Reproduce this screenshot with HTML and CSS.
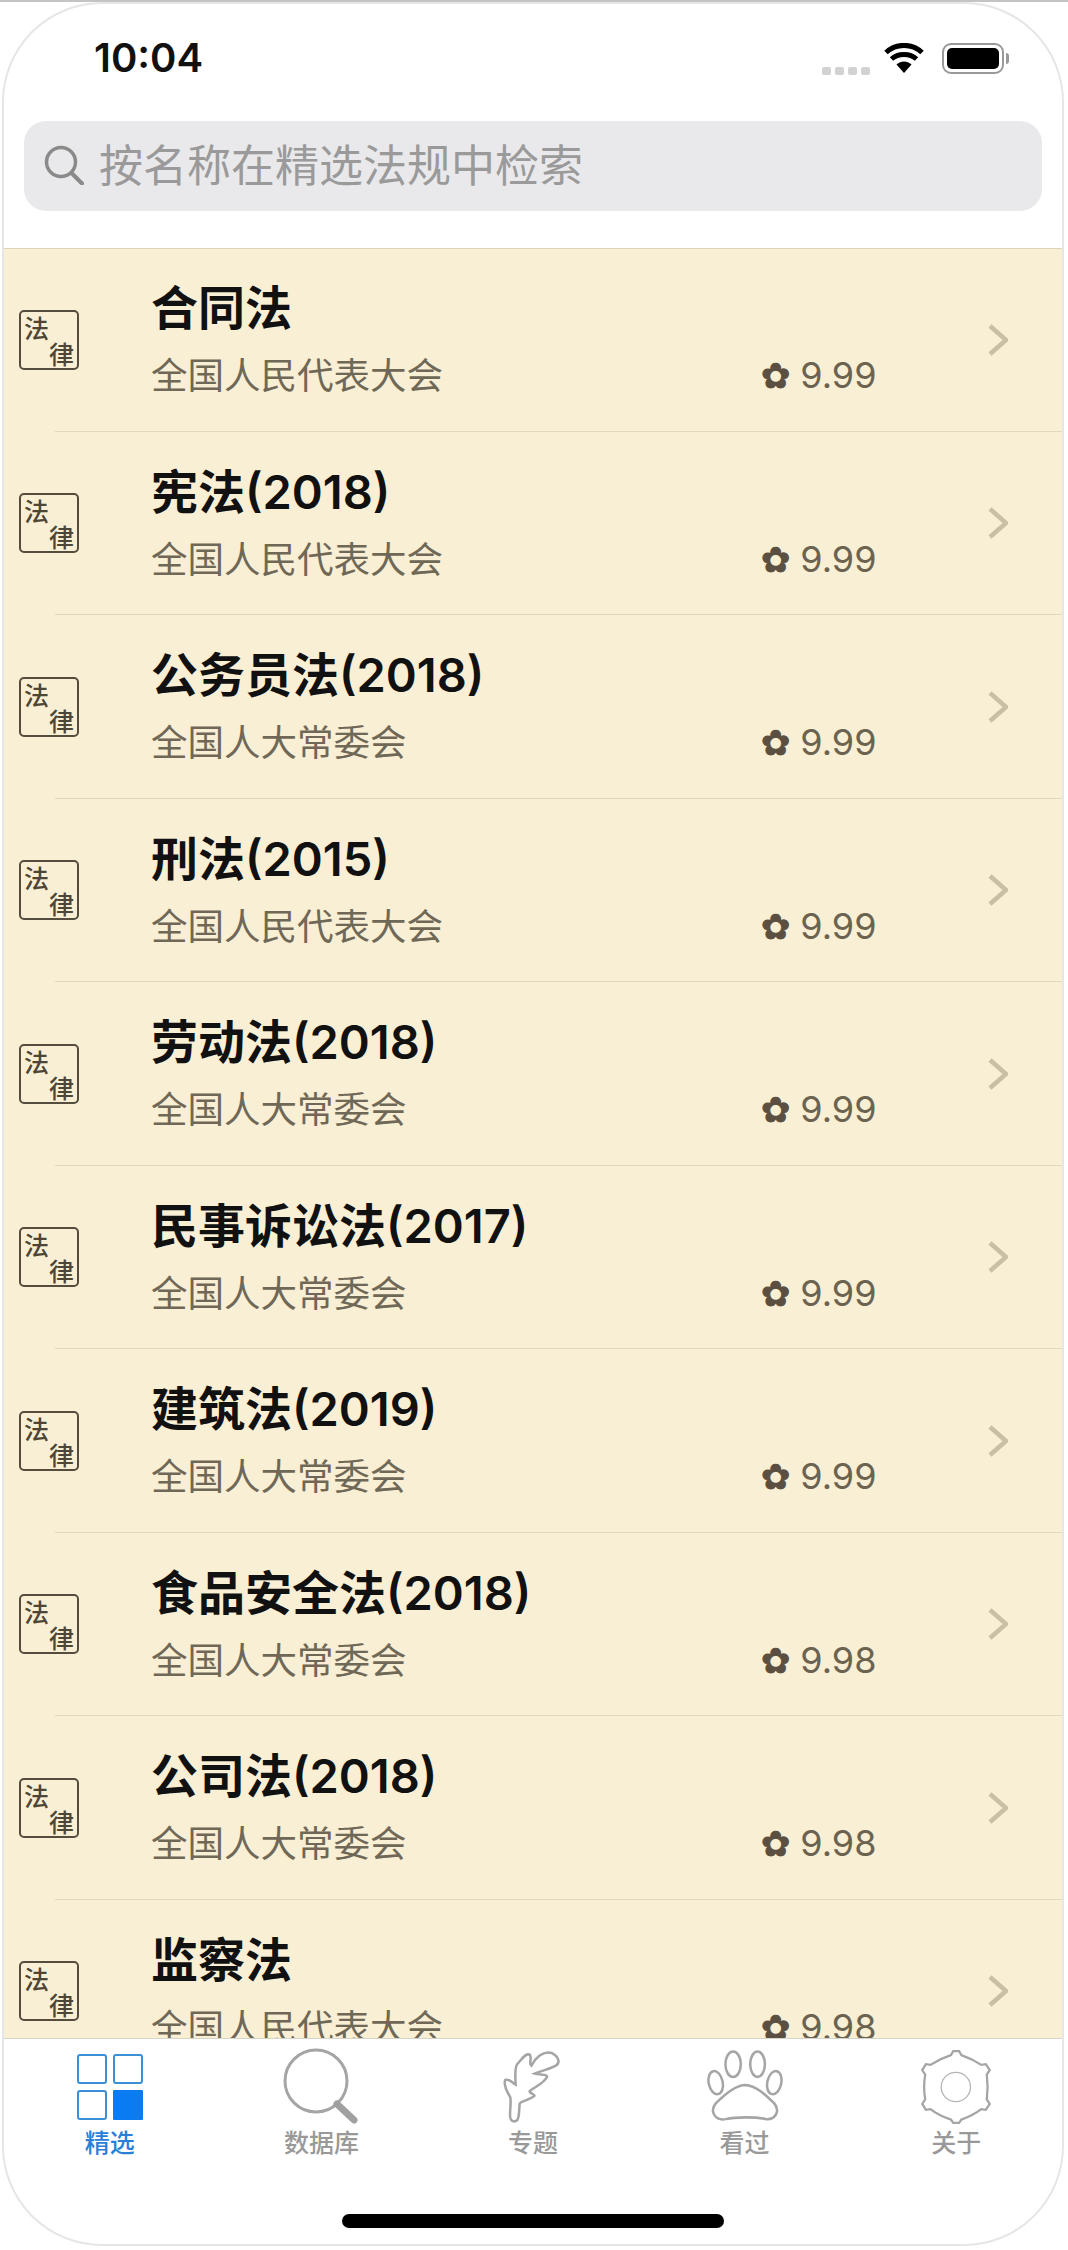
FILE: index.html
```html
<!DOCTYPE html>
<html lang="zh-CN">
<head>
    <meta charset="UTF-8">
    <meta name="viewport" content="width=device-width, initial-scale=1.0">
    <title>精选法规</title>
    <link rel="stylesheet" href="styles.css">
</head>
<body>
    <div class="phone">
        <div class="status-bar">
            <span class="time">10:04</span>
            <div class="status-icons">
                <div class="signal"><i></i><i></i><i></i><i></i></div>
                <svg class="wifi" viewBox="0 0 40 30">
                    <path d="M20 30 L12.500 21.500 C17 17.500 23 17.500 27.500 21.500 Z" fill="#000"/>
                    <path d="M7.500 16 C14 10 26 10 32.500 16" fill="none" stroke="#000" stroke-width="5"/>
                    <path d="M2 9.500 C12 0 28 0 38 9.500" fill="none" stroke="#000" stroke-width="5"/>
                </svg>
                <div class="battery"><div class="battery-level"></div></div>
                <div class="battery-cap"></div>
            </div>
        </div>
        <div class="search-wrap">
            <div class="search-box">
                <svg class="search-icon" viewBox="0 0 40 40">
                    <circle cx="17" cy="17" r="14.500" fill="none" stroke="#8a8a8a" stroke-width="3.500"/>
                    <path d="M27.500 28 L38 38.500" fill="none" stroke="#8a8a8a" stroke-width="4" stroke-linecap="round"/>
                </svg>
                <span class="placeholder">按名称在精选法规中检索</span>
            </div>
        </div>

        <div class="list">
            <div class="row">
                <div class="seal"><span>法</span><span>律</span></div>
                <div class="info"><div class="name">合同法</div><div class="org">全国人民代表大会</div></div>
                <div class="score"><span class="flower">✿</span>9.99</div>
                <svg class="chevron" viewBox="0 0 20 32"><path d="M2 2 L18 16 L2 30" /></svg>
            </div>
            <div class="row">
                <div class="seal"><span>法</span><span>律</span></div>
                <div class="info"><div class="name">宪法(2018)</div><div class="org">全国人民代表大会</div></div>
                <div class="score"><span class="flower">✿</span>9.99</div>
                <svg class="chevron" viewBox="0 0 20 32"><path d="M2 2 L18 16 L2 30" /></svg>
            </div>
            <div class="row">
                <div class="seal"><span>法</span><span>律</span></div>
                <div class="info"><div class="name">公务员法(2018)</div><div class="org">全国人大常委会</div></div>
                <div class="score"><span class="flower">✿</span>9.99</div>
                <svg class="chevron" viewBox="0 0 20 32"><path d="M2 2 L18 16 L2 30" /></svg>
            </div>
            <div class="row">
                <div class="seal"><span>法</span><span>律</span></div>
                <div class="info"><div class="name">刑法(2015)</div><div class="org">全国人民代表大会</div></div>
                <div class="score"><span class="flower">✿</span>9.99</div>
                <svg class="chevron" viewBox="0 0 20 32"><path d="M2 2 L18 16 L2 30" /></svg>
            </div>
            <div class="row">
                <div class="seal"><span>法</span><span>律</span></div>
                <div class="info"><div class="name">劳动法(2018)</div><div class="org">全国人大常委会</div></div>
                <div class="score"><span class="flower">✿</span>9.99</div>
                <svg class="chevron" viewBox="0 0 20 32"><path d="M2 2 L18 16 L2 30" /></svg>
            </div>
            <div class="row">
                <div class="seal"><span>法</span><span>律</span></div>
                <div class="info"><div class="name">民事诉讼法(2017)</div><div class="org">全国人大常委会</div></div>
                <div class="score"><span class="flower">✿</span>9.99</div>
                <svg class="chevron" viewBox="0 0 20 32"><path d="M2 2 L18 16 L2 30" /></svg>
            </div>
            <div class="row">
                <div class="seal"><span>法</span><span>律</span></div>
                <div class="info"><div class="name">建筑法(2019)</div><div class="org">全国人大常委会</div></div>
                <div class="score"><span class="flower">✿</span>9.99</div>
                <svg class="chevron" viewBox="0 0 20 32"><path d="M2 2 L18 16 L2 30" /></svg>
            </div>
            <div class="row">
                <div class="seal"><span>法</span><span>律</span></div>
                <div class="info"><div class="name">食品安全法(2018)</div><div class="org">全国人大常委会</div></div>
                <div class="score"><span class="flower">✿</span>9.98</div>
                <svg class="chevron" viewBox="0 0 20 32"><path d="M2 2 L18 16 L2 30" /></svg>
            </div>
            <div class="row">
                <div class="seal"><span>法</span><span>律</span></div>
                <div class="info"><div class="name">公司法(2018)</div><div class="org">全国人大常委会</div></div>
                <div class="score"><span class="flower">✿</span>9.98</div>
                <svg class="chevron" viewBox="0 0 20 32"><path d="M2 2 L18 16 L2 30" /></svg>
            </div>
            <div class="row">
                <div class="seal"><span>法</span><span>律</span></div>
                <div class="info"><div class="name">监察法</div><div class="org">全国人民代表大会</div></div>
                <div class="score"><span class="flower">✿</span>9.98</div>
                <svg class="chevron" viewBox="0 0 20 32"><path d="M2 2 L18 16 L2 30" /></svg>
            </div>
        </div>

        <div class="tab-bar">
            <div class="tab active">
                <svg class="tab-icon" width="66" height="66" viewBox="0 0 66 66">
                    <rect x="1" y="1" width="28" height="28" rx="2" fill="none" stroke="#3b8fd6" stroke-width="2"/>
                    <rect x="37" y="1" width="28" height="28" rx="2" fill="none" stroke="#3b8fd6" stroke-width="2"/>
                    <rect x="1" y="37" width="28" height="28" rx="2" fill="none" stroke="#3b8fd6" stroke-width="2"/>
                    <rect x="36" y="36" width="30" height="30" rx="1" fill="#0a7bf0"/>
                </svg>
                <span>精选</span>
            </div>
            <div class="tab">
                <svg class="tab-icon" width="76" height="76" viewBox="0 0 76 76">
                    <circle cx="33" cy="32" r="31" fill="none" stroke="#a5a5a5" stroke-width="3"/>
                    <path d="M54 55 L71 71" fill="none" stroke="#a0a0a0" stroke-width="7" stroke-linecap="round"/>
                </svg>
                <span>数据库</span>
            </div>
            <div class="tab">
                <svg class="tab-icon" width="60" height="75" viewBox="65 55 190 235">
                    <path d="M88 270 C85 250 92 225 88 205 C80 190 65 170 72 150 C85 145 95 160 105 165 C105 145 100 115 110 100 C125 85 135 65 150 70 C158 85 145 100 155 105 C165 85 190 55 220 65 C240 75 248 95 232 105 C215 115 190 120 165 130 C180 135 205 130 205 140 C195 160 170 170 150 185 C145 190 165 195 165 200 C150 215 125 215 118 225 C115 245 118 265 110 278 C100 285 90 280 88 270 Z" fill="none" stroke="#a5a5a5" stroke-width="8"/>
                </svg>
                <span>专题</span>
            </div>
            <div class="tab">
                <svg class="tab-icon" width="82" height="74" viewBox="495 212 245 228">
                    <g fill="none" stroke="#a5a5a5" stroke-width="7.500">
                        <ellipse cx="582" cy="258" rx="23" ry="38"/>
                        <ellipse cx="655" cy="258" rx="22" ry="38"/>
                        <ellipse cx="530" cy="313" rx="21" ry="35" transform="rotate(-12 530 313)"/>
                        <ellipse cx="705" cy="313" rx="21" ry="35" transform="rotate(12 705 313)"/>
                        <path d="M618 320 C650 322 680 350 705 375 C725 400 705 425 680 422 C650 415 590 415 560 422 C530 428 510 400 530 375 C555 350 590 320 618 320 Z"/>
                    </g>
                </svg>
                <span>看过</span>
            </div>
            <div class="tab">
                <svg class="tab-icon" width="72" height="77" viewBox="1130 204 221 232">
                    <path d="M1225 222 L1232 210 H1250 L1257 222 C1280 230 1300 240 1318 252 L1332 250 L1344 268 L1335 282 C1338 305 1338 335 1335 358 L1344 372 L1332 390 L1318 388 C1300 402 1280 412 1257 420 L1250 430 H1232 L1225 420 C1200 412 1180 402 1162 388 L1148 390 L1137 372 L1146 358 C1142 335 1142 305 1146 282 L1137 268 L1148 250 L1162 252 C1180 240 1200 230 1225 222 Z" fill="none" stroke="#a5a5a5" stroke-width="7"/>
                    <circle cx="1240" cy="320" r="45" fill="none" stroke="#b5b5b5" stroke-width="4"/>
                </svg>
                <span>关于</span>
            </div>
        </div>
        <div class="home-area"><div class="home-bar"></div></div>
    </div>
</body>
</html>
```

FILE: styles.css
```css
body {
    margin: 0;
    background-color: #fff;
    border-top: 2px solid #c4c4c4;
    font-family: "Noto Sans CJK SC", sans-serif;
}
.phone {
    box-sizing: border-box;
    width: 1062px;
    height: 2244px;
    margin-left: 2px;
    border: 2px solid #e6e6e6;
    border-radius: 100px;
    overflow: hidden;
    display: flex;
    flex-direction: column;
}
.status-bar {
    height: 117px;
    display: flex;
    justify-content: space-between;
    padding: 0 53px 0 90px;
}
.time {
    margin-top: 28px;
    font-family: Inter, sans-serif;
    font-size: 40px;
    font-weight: 600;
    line-height: 52px;
    color: #111;
}
.status-icons {
    display: flex;
    align-items: flex-start;
    margin-top: 39px;
}
.signal {
    display: flex;
    gap: 4px;
    margin-top: 24px;
    margin-right: 14px;
}
.signal i {
    width: 9px;
    height: 8px;
    border-radius: 2px;
    background-color: #d2d2d2;
}
.wifi {
    width: 40px;
    height: 30px;
    margin-right: 18px;
}
.battery {
    box-sizing: border-box;
    width: 62px;
    height: 31px;
    padding: 3px;
    border: 2px solid #999;
    border-radius: 9px;
}
.battery-level {
    height: 100%;
    background-color: #000;
    border-radius: 5px;
}
.battery-cap {
    width: 3px;
    height: 11px;
    margin: 10px 0 0 2px;
    background-color: #999;
    border-radius: 0 3px 3px 0;
}
.search-wrap {
    height: 127px;
    padding: 0 20px;
}
.search-box {
    height: 90px;
    display: flex;
    align-items: center;
    gap: 15px;
    padding-left: 20px;
    background-color: #e9e9eb;
    border-radius: 22px;
}
.search-icon {
    width: 40px;
    height: 40px;
    margin-bottom: 2px;
}
.placeholder {
    margin-bottom: 7px;
    font-size: 44px;
    line-height: 60px;
    color: #9a9a9a;
    white-space: nowrap;
}
.list {
    height: 1790px;
    overflow: hidden;
    background-color: #f9efd4;
    box-shadow: inset 0 1px 0 #d9d6bd;
    flex-shrink: 0;
}
.row {
    position: relative;
    height: 183.500px;
    display: flex;
    align-items: center;
    padding-left: 15px;
    box-sizing: border-box;
}
.row::after {
    content: "";
    position: absolute;
    left: 51px;
    right: 0;
    bottom: 0;
    height: 1px;
    background-color: #ddd9c2;
}
.seal {
    box-sizing: border-box;
    width: 60px;
    height: 60px;
    display: flex;
    flex-direction: column;
    padding: 2px 3px;
    border: 2px solid #544c3c;
    border-radius: 5px;
    font-size: 25px;
    font-weight: 500;
    line-height: 26px;
    color: #4d4536;
}
.seal span:last-child {
    align-self: flex-end;
}
.info {
    width: 610px;
    margin-left: 72px;
    align-self: flex-start;
    padding-top: 30px;
}
.name {
    font-family: Inter, "Noto Sans CJK SC", sans-serif;
    font-size: 47px;
    font-weight: 600;
    line-height: 60px;
    color: #111;
    white-space: nowrap;
}
.org {
    margin-top: 11px;
    font-size: 36.500px;
    line-height: 50px;
    color: #6f6857;
    white-space: nowrap;
}
.score {
    width: 227px;
    align-self: flex-start;
    margin-top: 102px;
    font-family: Inter, sans-serif;
    font-size: 36px;
    line-height: 50px;
    color: #6b6350;
    white-space: nowrap;
}
.flower {
    font-family: "DejaVu Sans", sans-serif;
    font-size: 35px;
    margin-right: 10px;
    color: #5a4f40;
    -webkit-text-stroke: 1px #5a4f40;
}
.chevron {
    width: 20px;
    height: 32px;
    fill: none;
    stroke: #c8bfa5;
    stroke-width: 4.500;
}
.tab-bar {
    height: 108px;
    flex-shrink: 0;
    display: grid;
    grid-template-columns: repeat(5, 1fr);
    background-color: #fff;
    border-top: 1px solid #d4d4c8;
    box-sizing: border-box;
}
.tab {
    display: flex;
    flex-direction: column;
    align-items: center;
    font-size: 25px;
    font-weight: 500;
    line-height: 30px;
    color: #999;
}
.tab-icon {
    height: 78px;
    margin-top: 9px;
    margin-bottom: 0;
}
.tab.active {
    color: #2a80d8;
}
.home-area {
    flex: 1;
    display: flex;
    justify-content: center;
    padding-top: 68px;
}
.home-bar {
    width: 382px;
    height: 14px;
    background-color: #000;
    border-radius: 7px;
}
```
